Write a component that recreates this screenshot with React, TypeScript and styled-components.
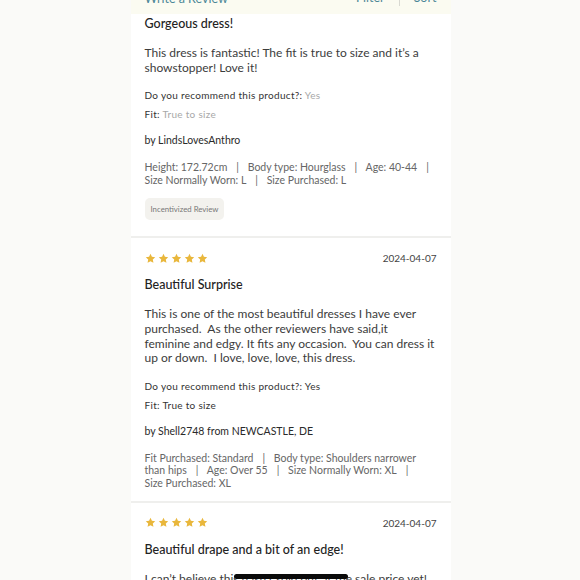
import React from "react";
import styled, { createGlobalStyle } from "styled-components";

const Global = createGlobalStyle`
  html, body { margin: 0; padding: 0; background: #fafaf8; }
  body { font-family: Lato, "Open Sans", sans-serif; -webkit-font-smoothing: antialiased; }
  * { box-sizing: border-box; }
`;

const Page = styled.div`
  width: 580px;
  height: 580px;
  overflow: hidden;
  display: flex;
  justify-content: center;
  align-items: flex-start;
  position: relative;
`;

const Column = styled.div`
  width: 320px;
  margin-left: 1px;
  min-height: 100%;
  background: #ffffff;
  display: flex;
  flex-direction: column;
`;

const TopBar = styled.div`
  flex-shrink: 0;
  height: 40px;
  margin-top: -26px;
  background: #fbfbf1;
  display: flex;
  align-items: flex-end;
  justify-content: space-between;
  padding: 0 14px 8px 14px;
  font-size: 12.5px;
  line-height: 14px;
  color: #4b8797;
`;

const Tools = styled.div`
  display: flex;
  align-items: center;
`;

const ToolLink = styled.span`
  padding: 0 14px;
  &:last-child { padding-right: 0; }
`;

const ToolDivider = styled.span`
  width: 1px;
  height: 16px;
  background: #d9d9d2;
`;

const Review = styled.div<{ $first?: boolean }>`
  flex-shrink: 0;
  padding: ${(p) => (p.$first ? "2px" : "12px")} 14px 11px 14px;
  border-bottom: 2px solid #efefed;
  display: flex;
  flex-direction: column;
`;

const HeadRow = styled.div`
  display: flex;
  justify-content: space-between;
  align-items: center;
  height: 16px;
  margin-bottom: 11px;
`;

const Stars = styled.div`
  display: flex;
  gap: 2px;
`;

const DateText = styled.span`
  font-size: 10px;
  color: #444;
`;

const Title = styled.div`
  font-size: 12.5px;
  font-weight: 500;
  color: #222;
  line-height: 16px;
  margin-bottom: 14px;
`;

const Body = styled.p`
  margin: 0 0 13.5px 0;
  font-size: 12px;
  line-height: 14.7px;
  color: #3c3c3c;
`;

const Meta = styled.div`
  font-size: 10px;
  line-height: 13px;
  color: #333;
  letter-spacing: 0.3px;
  margin-bottom: 6px;
`;

const MetaValue = styled.span<{ $muted?: boolean }>`
  color: ${(p) => (p.$muted ? "#a8a8a8" : "#333")};
`;

const Author = styled.div`
  font-size: 10.5px;
  line-height: 13px;
  color: #2a2a2a;
  margin: 7px 0 14px 0;
`;

const Attrs = styled.div`
  font-size: 10.5px;
  line-height: 12.7px;
  color: #666;
`;

const Sep = styled.span`
  padding: 0 6px 0 9px;
`;

const NoWrap = styled.span`
  white-space: nowrap;
`;

const Badge = styled.span`
  align-self: flex-start;
  margin-top: 12px;
  margin-bottom: 5px;
  background: #f3f2ee;
  border-radius: 5px;
  font-size: 7.8px;
  line-height: 10px;
  color: #777;
  padding: 6px;
  height: 22px;
`;

const HomeIndicator = styled.div`
  position: absolute;
  left: 234px;
  bottom: 1px;
  width: 114px;
  height: 5px;
  border-radius: 3px;
  background: #0a0a0a;
`;

const Star = () => (
  <svg width="11" height="11" viewBox="0 0 24 24">
    <path
      d="M12 1.8l3.1 6.6 7.2.9-5.3 5 1.4 7.1L12 17.9l-6.4 3.5 1.4-7.1-5.3-5 7.2-.9z"
      fill="#e9b73c"
    />
  </svg>
);

const FiveStars = () => (
  <Stars>
    {[0, 1, 2, 3, 4].map((i) => (
      <Star key={i} />
    ))}
  </Stars>
);

const Bar = () => (
  <>
    <Sep>|</Sep>{" "}
  </>
);

export default function App() {
  return (
    <Page>
      <Global />
      <Column>
        <TopBar>
          <span>Write a Review</span>
          <Tools>
            <ToolLink>Filter</ToolLink>
            <ToolDivider />
            <ToolLink>Sort</ToolLink>
          </Tools>
        </TopBar>

        <Review $first>
          <Title>Gorgeous dress!</Title>
          <Body>
            This dress is fantastic! The fit is true to size and it’s a showstopper! Love it!
          </Body>
          <Meta>
            Do you recommend this product?: <MetaValue $muted>Yes</MetaValue>
          </Meta>
          <Meta>
            Fit: <MetaValue $muted>True to size</MetaValue>
          </Meta>
          <Author>by LindsLovesAnthro</Author>
          <Attrs>
            <NoWrap>Height: 172.72cm</NoWrap>
            <Bar />
            <NoWrap>Body type: Hourglass</NoWrap>
            <Bar />
            <NoWrap>Age: 40-44</NoWrap>
            <Bar />
            <NoWrap>Size Normally Worn: L</NoWrap>
            <Bar />
            <NoWrap>Size Purchased: L</NoWrap>
          </Attrs>
          <Badge>Incentivized Review</Badge>
        </Review>

        <Review>
          <HeadRow>
            <FiveStars />
            <DateText>2024-04-07</DateText>
          </HeadRow>
          <Title>Beautiful Surprise</Title>
          <Body>
            This is one of the most beautiful dresses I have ever purchased.&nbsp; As the other
            reviewers have said,it feminine and edgy. It fits any occasion.&nbsp; You can dress it
            up or down.&nbsp; I love, love, love, this dress.
          </Body>
          <Meta>
            Do you recommend this product?: <MetaValue>Yes</MetaValue>
          </Meta>
          <Meta>
            Fit: <MetaValue>True to size</MetaValue>
          </Meta>
          <Author>by Shell2748 from NEWCASTLE, DE</Author>
          <Attrs>
            <NoWrap>Fit Purchased: Standard</NoWrap>
            <Bar />
            Body type: Shoulders narrower than hips
            <Bar />
            <NoWrap>Age: Over 55</NoWrap>
            <Bar />
            <NoWrap>Size Normally Worn: XL</NoWrap>
            <Bar />
            <NoWrap>Size Purchased: XL</NoWrap>
          </Attrs>
        </Review>

        <Review>
          <HeadRow>
            <FiveStars />
            <DateText>2024-04-07</DateText>
          </HeadRow>
          <Title>Beautiful drape and a bit of an edge!</Title>
          <Body>I can’t believe this hasn’t sold out at the sale price yet!</Body>
        </Review>
      </Column>
      <HomeIndicator />
    </Page>
  );
}
